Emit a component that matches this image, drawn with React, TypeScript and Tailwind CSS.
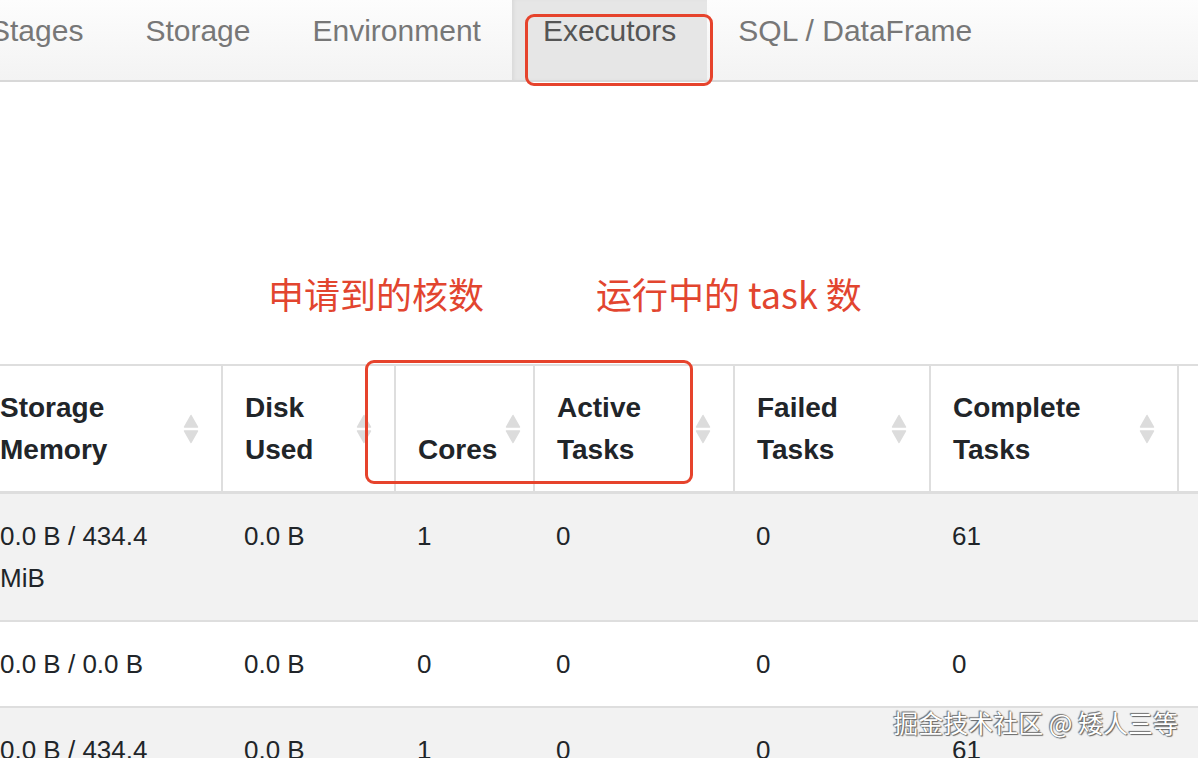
import React from "react";

const tabs = ["Stages", "Storage", "Environment", "Executors", "SQL / DataFrame"];

const columns = [
  { label: "Storage Memory", width: "w-[222px]", first: true },
  { label: "Disk Used", width: "w-[173px]" },
  { label: "Cores", width: "w-[139px]" },
  { label: "Active Tasks", width: "w-[200px]" },
  { label: "Failed Tasks", width: "w-[196px]" },
  { label: "Complete Tasks", width: "w-[248px]" },
  { label: "", width: "w-[200px]" },
];

const rows = [
  ["0.0 B / 434.4 MiB", "0.0 B", "1", "0", "0", "61", ""],
  ["0.0 B / 0.0 B", "0.0 B", "0", "0", "0", "0", ""],
  ["0.0 B / 434.4 MiB", "0.0 B", "1", "0", "0", "61", ""],
];

function SortIcon() {
  return (
    <svg width="16" height="30" viewBox="0 0 16 30" className="shrink-0 self-center">
      <path d="M8 1.5 L14.5 13 L1.5 13 Z" fill="#dcdcdc" stroke="#dcdcdc" strokeLinejoin="round" strokeWidth="1.5" />
      <path d="M1.5 17 L14.5 17 L8 28.5 Z" fill="#dcdcdc" stroke="#dcdcdc" strokeLinejoin="round" strokeWidth="1.5" />
    </svg>
  );
}

export default function App() {
  return (
    <div className="relative h-[758px] w-[1198px] overflow-hidden bg-white font-['Liberation_Sans',Arial,sans-serif] text-[#212529]">
      {/* navbar */}
      <nav className="flex h-[82px] border-b-2 border-[#d8d8d8] bg-gradient-to-b from-[#fdfdfd] to-[#f3f3f3]">
        <div className="ml-[-41px] flex">
          {tabs.map((t) => (
            <div
              key={t}
              className={`px-[31px] pt-[10px] text-[30px] leading-[42px] whitespace-nowrap ${
                t === "Executors"
                  ? "bg-[#e6e6e6] text-[#555] shadow-[inset_3px_0_4px_-2px_rgba(0,0,0,0.08)]"
                  : "text-[#777]"
              }`}
            >
              {t}
            </div>
          ))}
        </div>
      </nav>

      {/* annotations */}
      <div className="flex h-[282px] pt-[187px] font-['Noto_Sans_CJK_SC',sans-serif] text-[36px] leading-[48px] text-[#e2452f]">
        <div className="ml-[268px] w-[328px]">申请到的核数</div>
        <div>运行中的 task 数</div>
      </div>

      {/* table */}
      <div className="overflow-hidden">
        <table className="w-[1378px] table-fixed border-collapse">
          <thead>
            <tr className="border-t-2 border-b-[3px] border-[#dedede]">
              {columns.map((c, i) => (
                <th
                  key={i}
                  className={`${c.width} border-r-2 border-[#dedede] pt-[21px] pr-[22px] pb-[20px] text-left align-bottom text-[28px] leading-[42px] font-bold ${
                    c.first ? "pl-0" : "pl-[22px]"
                  }`}
                >
                  {c.label && (
                    <div className="flex h-[84px] justify-between gap-2">
                      <span className="self-end">{c.label}</span>
                      <SortIcon />
                    </div>
                  )}
                </th>
              ))}
            </tr>
          </thead>
          <tbody>
            {rows.map((r, ri) => (
              <tr
                key={ri}
                className={`border-b-2 border-[#dedede] ${ri % 2 === 0 ? "bg-[#f2f2f2]" : "bg-white"}`}
              >
                {r.map((v, ci) => (
                  <td
                    key={ci}
                    className={`py-[21px] align-top text-[26px] leading-[42px] ${
                      ci === 0 ? "pl-0 pr-[40px]" : "px-[22px]"
                    }`}
                  >
                    {v}
                  </td>
                ))}
              </tr>
            ))}
          </tbody>
        </table>
      </div>

      {/* highlight boxes */}
      <div className="absolute left-[525px] top-[14px] h-[72px] w-[188px] rounded-[9px] border-[3px] border-[#e6432c]" />
      <div className="absolute left-[365px] top-[360px] h-[124px] w-[328px] rounded-[9px] border-[3px] border-[#e6432c]" />

      {/* watermark */}
      <div className="absolute right-[20px] top-[702px] font-['Noto_Sans_CJK_SC',sans-serif] text-[25px] leading-[40px] text-white [text-shadow:0_0_1px_#555,1px_1px_1px_#666,-1px_-1px_1px_#777]">
        掘金技术社区 @ 矮人三等
      </div>
    </div>
  );
}
